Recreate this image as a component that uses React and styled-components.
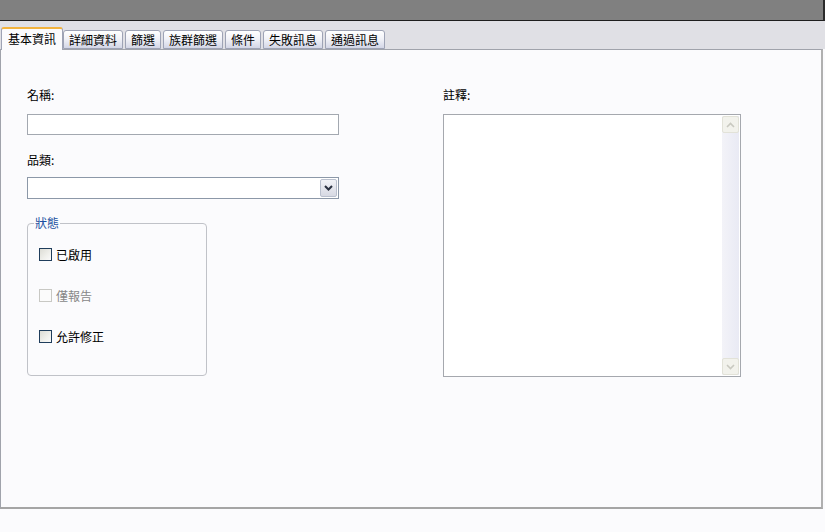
import React from "react";
import styled, { createGlobalStyle } from "styled-components";

const Global = createGlobalStyle`
  html, body { margin: 0; padding: 0; background: #fbfbfd; }
  body { font-family: "Noto Sans CJK TC", "Noto Sans", sans-serif; font-size: 12px; color: #000; }
`;

const Page = styled.div`
  width: 825px;
  height: 532px;
  display: flex;
  flex-direction: column;
  background: #fbfbfd;
`;

const TopBar = styled.div`
  height: 20px;
  background: #808080;
  border-bottom: 1px solid #1e1e1e;
  border-right: 2px solid #2a2a2a;
  flex: none;
`;

const TabStrip = styled.div`
  height: 28px;
  background: #e0e0e5;
  display: flex;
  align-items: flex-end;
  padding-left: 1px;
  flex: none;
  position: relative;
  z-index: 2;
`;

const Tab = styled.div`
  box-sizing: border-box;
  height: ${(p) => (p.$active ? "23px" : "19px")};
  margin-bottom: ${(p) => (p.$active ? "-1px" : "0")};
  padding: ${(p) => (p.$active ? "2px 6px 0 6px" : "1px 5px 0 5px")};
  margin-right: ${(p) => (p.$active ? "0" : "2px")};
  border: 1px solid #9ea3b5;
  border-bottom: ${(p) => (p.$active ? "none" : "1px solid #9ea3b5")};
  border-top: ${(p) => (p.$active ? "2px solid #f2b33d" : "1px solid #9ea3b5")};
  border-radius: 3px 3px 0 0;
  background: ${(p) =>
    p.$active ? "#fbfbfd" : "linear-gradient(#ffffff 0%, #f2f3f8 45%, #d3d6e6 100%)"};
  font-size: 12px;
  line-height: 15px;
  white-space: nowrap;
  color: #000;
`;

const Panel = styled.div`
  box-sizing: border-box;
  width: 823px;
  height: 460px;
  border: 1px solid #a0a3ab;
  border-bottom: 2px solid #a5a5a5;
  border-right: 2px solid #b0b0b0;
  background: #fbfbfd;
  padding: 37px 0 0 26px;
  display: grid;
  grid-template-columns: 312px 297px;
  column-gap: 104px;
  align-items: start;
  flex: none;
`;

const Column = styled.div`
  display: flex;
  flex-direction: column;
`;

const Label = styled.div`
  font-size: 12px;
  line-height: 16px;
  height: 16px;
  margin-bottom: ${(p) => p.$mb || 11}px;
`;

const TextInput = styled.div`
  box-sizing: border-box;
  height: 21px;
  border: 1px solid #a3a8b0;
  background: #fff;
  margin-bottom: 17px;
`;

const Select = styled.div`
  box-sizing: border-box;
  height: 22px;
  border: 1px solid #8c98a8;
  background: #fff;
  display: flex;
  justify-content: flex-end;
  padding: 1px;
  margin-bottom: 17px;
`;

const DropButton = styled.div`
  box-sizing: border-box;
  width: 17px;
  height: 18px;
  border: 1px solid #b9bfcd;
  border-radius: 2px;
  background: linear-gradient(#f2f3f7, #d7d9e3);
  display: flex;
  align-items: center;
  justify-content: center;
`;

const Fieldset = styled.fieldset`
  box-sizing: border-box;
  width: 180px;
  height: 160px;
  margin: 0;
  padding: 16px 0 0 11px;
  border: 1px solid #c0c2c8;
  border-radius: 4px;
  display: flex;
  flex-direction: column;
  gap: 25px;
`;

const Legend = styled.legend`
  color: #1a4fa0;
  padding: 0 1px;
  margin-left: -5px;
  font-size: 12px;
  line-height: 14px;
`;

const CheckRow = styled.div`
  display: flex;
  align-items: center;
  gap: 4px;
  height: 16px;
  color: ${(p) => (p.$disabled ? "#888" : "#000")};
`;

const Box = styled.span`
  box-sizing: border-box;
  width: 13px;
  height: 13px;
  border: 1px solid ${(p) => (p.$disabled ? "#c8c8c4" : "#1f3d5c")};
  background: ${(p) =>
    p.$disabled ? "#fbfbfb" : "linear-gradient(135deg, #dcdcd5 0%, #f0f0ec 60%, #fafafa 100%)"};
  flex: none;
`;

const TextArea = styled.div`
  box-sizing: border-box;
  width: 298px;
  height: 263px;
  border: 1px solid #a5a8ae;
  background: #fff;
  display: flex;
  justify-content: flex-end;
  padding: 1px;
`;

const ScrollBar = styled.div`
  width: 17px;
  display: flex;
  flex-direction: column;
  justify-content: space-between;
  background: linear-gradient(90deg, #f3f3f8, #e9eaf4);
`;

const ScrollBtn = styled.div`
  box-sizing: border-box;
  width: 17px;
  height: 17px;
  border: 1px solid #e2e2d8;
  border-radius: 2px;
  background: #f2f2ec;
  display: flex;
  align-items: center;
  justify-content: center;
`;

const Footer = styled.div`
  flex: 1;
  background: #fbfbfd;
`;

const Chevron = ({ up, color, w = 2 }) => (
  <svg width="9" height="6" viewBox="0 0 9 6">
    <path
      d={up ? "M1 5 L4.5 1.5 L8 5" : "M1 1 L4.5 4.5 L8 1"}
      fill="none"
      stroke={color}
      strokeWidth={w}
    />
  </svg>
);

const tabs = ["基本資訊", "詳細資料", "篩選", "族群篩選", "條件", "失敗訊息", "通過訊息"];

export default function App() {
  return (
    <Page>
      <Global />
      <TopBar />
      <TabStrip>
        {tabs.map((t, i) => (
          <Tab key={t} $active={i === 0}>
            {t}
          </Tab>
        ))}
      </TabStrip>
      <Panel>
        <Column>
          <Label>名稱:</Label>
          <TextInput />
          <Label $mb={9}>品類:</Label>
          <Select>
            <DropButton>
              <Chevron color="#2a3140" w={2} />
            </DropButton>
          </Select>
          <Fieldset>
            <Legend>狀態</Legend>
            <CheckRow>
              <Box />
              已啟用
            </CheckRow>
            <CheckRow $disabled>
              <Box $disabled />
              僅報告
            </CheckRow>
            <CheckRow>
              <Box />
              允許修正
            </CheckRow>
          </Fieldset>
        </Column>
        <Column>
          <Label>註釋:</Label>
          <TextArea>
            <ScrollBar>
              <ScrollBtn>
                <Chevron up color="#c9c9c0" w={1.6} />
              </ScrollBtn>
              <ScrollBtn>
                <Chevron color="#c9c9c0" w={1.6} />
              </ScrollBtn>
            </ScrollBar>
          </TextArea>
        </Column>
      </Panel>
      <Footer />
    </Page>
  );
}
